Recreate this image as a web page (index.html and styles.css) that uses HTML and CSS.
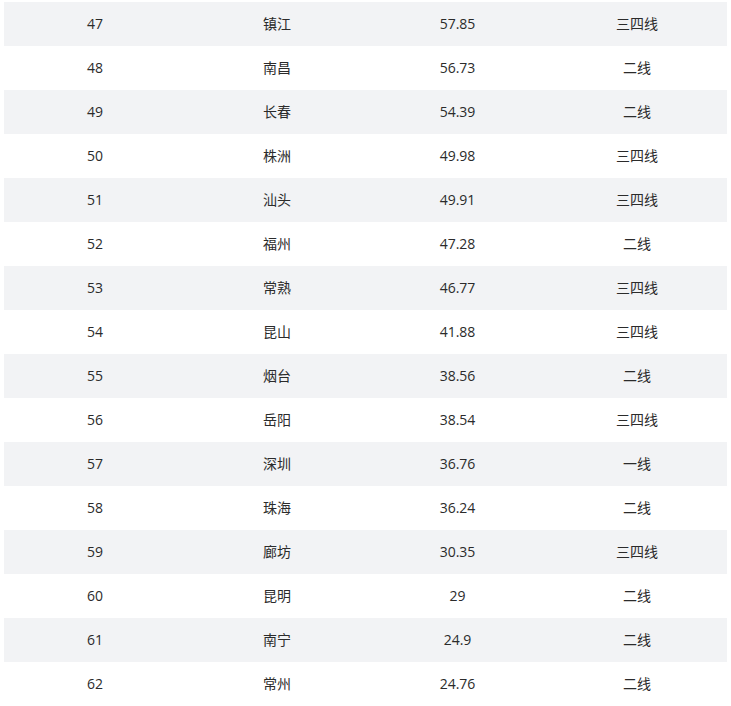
FILE: index.html
```html
<!DOCTYPE html>
<html lang="zh-CN">
<head>
<meta charset="utf-8">
<link rel="stylesheet" href="styles.css">
</head>
<body>
<table class="tbl">
<colgroup>
<col class="c1"><col class="c2"><col class="c3"><col class="c4">
</colgroup>
<tbody>
<tr class="odd"><td>47</td><td>镇江</td><td>57.85</td><td>三四线</td></tr>
<tr><td>48</td><td>南昌</td><td>56.73</td><td>二线</td></tr>
<tr class="odd"><td>49</td><td>长春</td><td>54.39</td><td>二线</td></tr>
<tr><td>50</td><td>株洲</td><td>49.98</td><td>三四线</td></tr>
<tr class="odd"><td>51</td><td>汕头</td><td>49.91</td><td>三四线</td></tr>
<tr><td>52</td><td>福州</td><td>47.28</td><td>二线</td></tr>
<tr class="odd"><td>53</td><td>常熟</td><td>46.77</td><td>三四线</td></tr>
<tr><td>54</td><td>昆山</td><td>41.88</td><td>三四线</td></tr>
<tr class="odd"><td>55</td><td>烟台</td><td>38.56</td><td>二线</td></tr>
<tr><td>56</td><td>岳阳</td><td>38.54</td><td>三四线</td></tr>
<tr class="odd"><td>57</td><td>深圳</td><td>36.76</td><td>一线</td></tr>
<tr><td>58</td><td>珠海</td><td>36.24</td><td>二线</td></tr>
<tr class="odd"><td>59</td><td>廊坊</td><td>30.35</td><td>三四线</td></tr>
<tr><td>60</td><td>昆明</td><td>29</td><td>二线</td></tr>
<tr class="odd"><td>61</td><td>南宁</td><td>24.9</td><td>二线</td></tr>
<tr><td>62</td><td>常州</td><td>24.76</td><td>二线</td></tr>
</tbody>
</table>
</body>
</html>
```
FILE: styles.css
```css
html, body {
  margin: 0;
  padding: 0;
  background: #ffffff;
}
body {
  padding: 2px 4px 0 4px;
  font-family: "Open Sans", "Noto Sans CJK SC", sans-serif;
  font-size: 14px;
  color: #2b2b2b;
}
.tbl {
  width: 723px;
  border-collapse: collapse;
  table-layout: fixed;
}
.c1 { width: 182px; }
.c2 { width: 182px; }
.c3 { width: 179px; }
.c4 { width: 180px; }
.tbl td {
  height: 44px;
  padding: 0;
  text-align: center;
  vertical-align: middle;
  line-height: 20px;
}
.tbl tr.odd td {
  background: #f2f3f5;
}
```
